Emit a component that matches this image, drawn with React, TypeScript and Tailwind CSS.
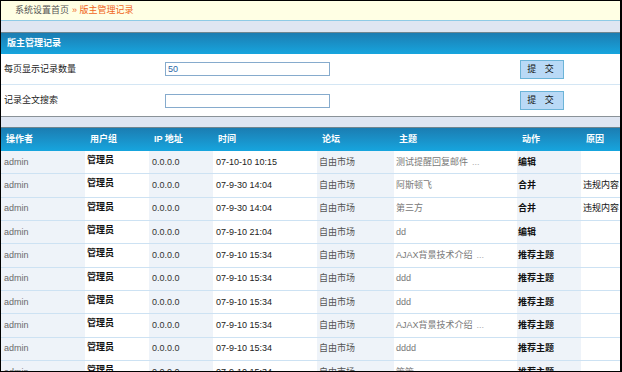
const rows = [
  { time: "07-10-10 10:15", topic: "测试提醒回复邮件", more: true, action: "编辑", reason: "" },
  { time: "07-9-30 14:04", topic: "阿斯顿飞", more: false, action: "合并", reason: "违规内容" },
  { time: "07-9-30 14:04", topic: "第三方", more: false, action: "合并", reason: "违规内容" },
  { time: "07-9-10 21:04", topic: "dd", more: false, action: "编辑", reason: "" },
  { time: "07-9-10 15:34", topic: "AJAX背景技术介绍", more: true, action: "推荐主题", reason: "" },
  { time: "07-9-10 15:34", topic: "ddd", more: false, action: "推荐主题", reason: "" },
  { time: "07-9-10 15:34", topic: "ddd", more: false, action: "推荐主题", reason: "" },
  { time: "07-9-10 15:34", topic: "AJAX背景技术介绍", more: true, action: "推荐主题", reason: "" },
  { time: "07-9-10 15:34", topic: "dddd", more: false, action: "推荐主题", reason: "" },
  { time: "07-9-10 15:34", topic: "笨笨", more: false, action: "推荐主题", reason: "" },
];

const headers = [
  { label: "操作者", w: "w-[84px]" },
  { label: "用户组", w: "w-[64px]" },
  { label: "IP 地址", w: "w-[64px]" },
  { label: "时间", w: "w-[104px]" },
  { label: "论坛", w: "w-[77px]" },
  { label: "主题", w: "w-[123px]" },
  { label: "动作", w: "w-[64px]" },
  { label: "原因", w: "flex-1" },
];

function FormRow({ label, value, last }: { label: string; value?: string; last?: boolean }) {
  return (
    <div
      className={
        "h-[31px] flex items-center " +
        (last ? "" : "border-b border-[#d4e6f4]")
      }
    >
      <div className="w-[164px] pl-[3px] text-[#222]">{label}</div>
      <input
        readOnly
        value={value ?? ""}
        className="w-[165px] h-[14px] border border-[#86abcd] px-[2px] text-[9px] text-[#2b68a6] outline-none"
      />
      <div className="w-[190px]" />
      <button className="w-[44px] h-[19px] bg-[#b9d9f6] border border-[#6cb4d8] text-[#111] text-[9px] tracking-[3px]">
        提 交
      </button>
    </div>
  );
}

export default function App() {
  return (
    <div className="w-[622px] h-[372px] overflow-hidden border border-black border-r-2 bg-white flex flex-col text-[9px] leading-none font-['Liberation_Sans','Noto_Sans_CJK_SC',sans-serif]">
      {/* Breadcrumb */}
      <div className="h-[20px] shrink-0 bg-[#ffffe4] border-b border-[#8fcbe6] pl-[14px] flex items-center text-[#555]">
        系统设置首页
        <span className="ml-[3px] text-[#f0651a]">» 版主管理记录</span>
      </div>
      <div className="h-[11px] shrink-0 bg-[#dfe6f2]" />

      {/* Settings panel */}
      <div className="shrink-0 border-t border-[#6f8690] border-b border-b-[#8a9298]">
        <div className="h-[21px] bg-linear-to-b from-[#1b7db2] to-[#16a5de] pl-[6px] flex items-center text-white font-bold">
          版主管理记录
        </div>
        <FormRow label="每页显示记录数量" value="50" />
        <FormRow label="记录全文搜索" last />
      </div>
      <div className="h-[10px] shrink-0 bg-[#dfe6f2]" />

      {/* Log table */}
      <div className="border-t border-[#6f8690]">
        <div className="h-[23px] bg-linear-to-b from-[#1b7db2] to-[#16a5de] flex items-center text-white font-bold">
          {headers.map((h) => (
            <div key={h.label} className={h.w + " pl-[5px]"}>
              {h.label}
            </div>
          ))}
        </div>
        {rows.map((r, i) => (
          <div key={i} className="h-[23.34px] flex border-b border-[#cde2f3]">
            <div className="w-[84px] bg-[#eef3f9] pl-[3px] flex items-center text-[#6a6a6a]">admin</div>
            <div className="w-[64px] pl-[2px] flex items-center pb-[3px] font-bold text-[#111]">管理员</div>
            <div className="w-[64px] bg-[#eef3f9] pl-[3px] flex items-center text-[#333]">0.0.0.0</div>
            <div className="w-[104px] pl-[3px] flex items-center text-[#222]">{r.time}</div>
            <div className="w-[77px] bg-[#eef3f9] pl-[2px] flex items-center text-[#555]">自由市场</div>
            <div className="w-[123px] pl-[2px] flex items-center text-[#777]">
              {r.topic}
              {r.more && <span className="ml-[4px] text-[#aaa]">...</span>}
            </div>
            <div className="w-[64px] bg-[#eef3f9] pl-[1px] flex items-center font-bold text-[#111]">{r.action}</div>
            <div className="flex-1 pl-[2px] flex items-center text-[#111] whitespace-nowrap">{r.reason}</div>
          </div>
        ))}
      </div>
    </div>
  );
}
